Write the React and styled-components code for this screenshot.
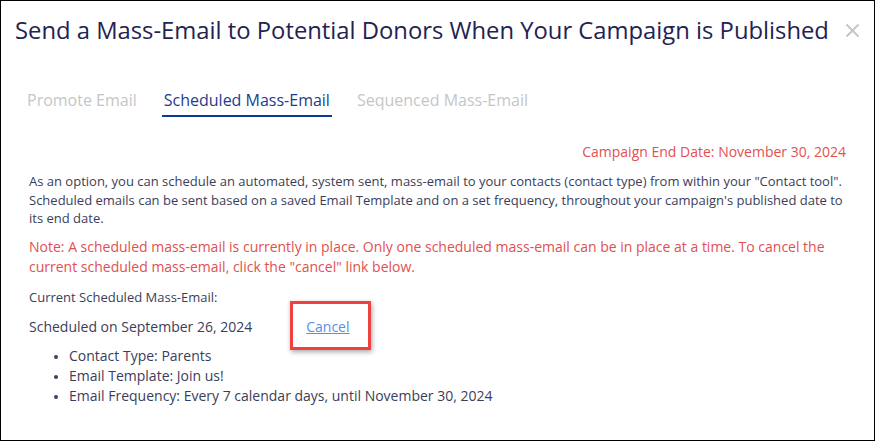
import React from 'react';
import styled, { createGlobalStyle } from 'styled-components';

const NAVY = '#1f2352';
const BODY = '#3b3d5a';
const RED = '#e2504f';
const LINK = '#5a8de6';
const MUTED = '#c6c6c6';
const ACTIVE = '#1c3d8f';

const GlobalStyle = createGlobalStyle`
  * { box-sizing: border-box; }
  body {
    margin: 0;
    background: #ffffff;
    font-family: "Open Sans", "Noto Sans", sans-serif;
  }
`;

const tabs = ['Promote Email', 'Scheduled Mass-Email', 'Sequenced Mass-Email'];

const details = [
  'Contact Type: Parents',
  'Email Template: Join us!',
  'Email Frequency: Every 7 calendar days, until November 30, 2024',
];

export default function App() {
  return (
    <>
      <GlobalStyle />
      <Modal>
        <Header>
          <Title>Send a Mass-Email to Potential Donors When Your Campaign is Published</Title>
          <CloseButton aria-label="Close">
            <svg width="15" height="15" viewBox="0 0 15 15">
              <path d="M1.5 1.5 L13.5 13.5 M13.5 1.5 L1.5 13.5" stroke={MUTED} strokeWidth="2" />
            </svg>
          </CloseButton>
        </Header>

        <TabBar>
          {tabs.map((t, i) => (
            <Tab key={t} active={i === 1}>
              {t}
            </Tab>
          ))}
        </TabBar>

        <Body>
          <EndDate>Campaign End Date: November 30, 2024</EndDate>
          <Intro>
            As an option, you can schedule an automated, system sent, mass-email to your contacts
            (contact type) from within your "Contact tool". Scheduled emails can be sent based on a
            saved Email Template and on a set frequency, throughout your campaign's published date
            to its end date.
          </Intro>
          <Note>
            Note: A scheduled mass-email is currently in place. Only one scheduled mass-email can be
            in place at a time. To cancel the current scheduled mass-email, click the "cancel" link
            below.
          </Note>
          <Label>Current Scheduled Mass-Email:</Label>
          <ScheduleRow>
            <span>Scheduled on September 26, 2024</span>
            <CancelLink href="#">Cancel</CancelLink>
          </ScheduleRow>
          <DetailList>
            {details.map((d) => (
              <li key={d}>{d}</li>
            ))}
          </DetailList>
        </Body>
      </Modal>
    </>
  );
}

const Modal = styled.div`
  width: 875px;
  height: 441px;
  border: 1px solid #000000;
  background: #ffffff;
  display: flex;
  flex-direction: column;
  overflow: hidden;
`;

const Header = styled.div`
  display: flex;
  align-items: center;
  justify-content: space-between;
  padding: 14px 14px 0 14px;
`;

const Title = styled.h1`
  margin: 0;
  font-size: 23.8px;
  line-height: 30px;
  font-weight: 400;
  color: ${NAVY};
  white-space: nowrap;
`;

const CloseButton = styled.button`
  border: 0;
  background: none;
  padding: 0;
  width: 15px;
  height: 15px;
  display: flex;
  cursor: pointer;
`;

const TabBar = styled.div`
  display: flex;
  gap: 23px;
  padding: 45px 0 0 24px;
`;

const Tab = styled.div`
  padding: 0 2px 5px;
  font-size: 16px;
  line-height: 20px;
  color: ${({ active }) => (active ? ACTIVE : MUTED)};
  border-bottom: 2px solid ${({ active }) => (active ? '#0d3992' : 'transparent')};
  cursor: pointer;
`;

const Body = styled.div`
  padding: 25px 28px 0 28px;
  display: flex;
  flex-direction: column;
`;

const EndDate = styled.div`
  align-self: flex-end;
  font-size: 14px;
  line-height: 20px;
  color: ${RED};
`;

const Intro = styled.p`
  margin: 10px 0 0;
  font-size: 13px;
  line-height: 18.5px;
  color: ${BODY};
`;

const Note = styled.p`
  margin: 9.4px 0 0;
  font-size: 14px;
  line-height: 20px;
  color: ${RED};
`;

const Label = styled.div`
  margin-top: 11px;
  font-size: 13px;
  line-height: 18.5px;
  color: ${BODY};
`;

const ScheduleRow = styled.div`
  margin-top: 10.4px;
  display: flex;
  align-items: center;
  gap: 54px;
  font-size: 14px;
  line-height: 20px;
  color: ${BODY};
`;

const CancelLink = styled.a`
  position: relative;
  color: ${LINK};
  text-decoration: underline;

  &::after {
    content: '';
    position: absolute;
    left: -16px;
    right: -21px;
    top: -15.6px;
    bottom: -13.4px;
    border: 3px solid #f04141;
    box-shadow: 1px 2px 5px rgba(0, 0, 0, 0.35);
    pointer-events: none;
  }
`;

const DetailList = styled.ul`
  margin: 9px 0 0;
  padding-left: 40px;
  font-size: 14px;
  line-height: 20px;
  color: ${BODY};

  li::marker {
    font-size: 12px;
  }
`;
